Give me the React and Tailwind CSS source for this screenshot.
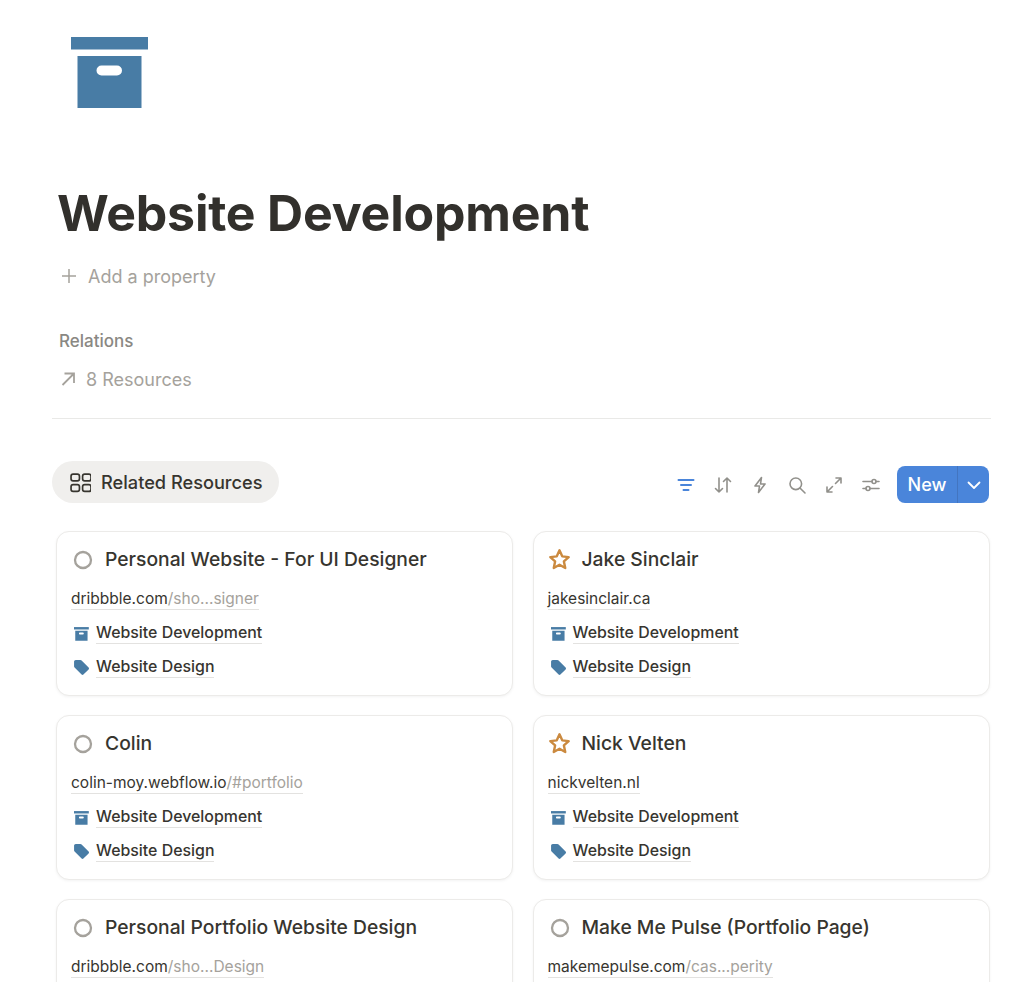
import React from "react";

const BLUE = "#487CA5";

function BoxIcon({ className }) {
  return (
    <svg viewBox="0 0 78 72" className={className} fill={BLUE}>
      <rect x="0" y="0" width="77" height="12.5" />
      <path fillRule="evenodd" d="M6.5 19h64v52h-64z M30.5 28.5a5 5 0 0 0 0 10h15.5a5 5 0 0 0 0-10z" />
    </svg>
  );
}

function TagIcon() {
  return (
    <svg viewBox="0 0 16 16" className="w-[17px] h-[17px] shrink-0" fill={BLUE}>
      <path d="M1 2.6C1 1.7 1.7 1 2.6 1h4.3c.5 0 .9.2 1.2.5l6.6 6.6c.5.5.5 1.2 0 1.7l-4.9 4.9c-.5.5-1.2.5-1.7 0L1.5 8.1C1.2 7.8 1 7.4 1 6.9z" />
    </svg>
  );
}

function Circle() {
  return (
    <svg viewBox="0 0 20 20" className="w-5 h-5 shrink-0" fill="none" stroke="#A5A29C" strokeWidth="2.3">
      <circle cx="10" cy="10" r="8" />
    </svg>
  );
}

function Star() {
  return (
    <svg viewBox="0 0 22 22" className="w-[23px] h-[23px] shrink-0 -ml-[2px]" fill="none" stroke="#CB8A3F" strokeWidth="2.3" strokeLinejoin="round">
      <path d="M11 2.2l2.6 5.8 6.2.7-4.6 4.2 1.3 6.2L11 16l-5.5 3.1 1.3-6.2-4.6-4.2 6.2-.7z" />
    </svg>
  );
}

function Card({ icon, title, host, path }) {
  return (
    <div className="h-[165px] rounded-[13px] border border-[#ECEBE9] bg-white pl-[14px] pr-3 shadow-[0_1px_3px_rgba(15,15,15,0.05)] overflow-hidden">
      <div className="flex items-center h-[27px] mt-[14px]">
        <span className="w-[34px] flex items-center pl-[2px]">{icon}</span>
        <span className="text-[19.3px] font-medium text-[#37352F] leading-[27px]">{title}</span>
      </div>
      <div className="mt-[14px] h-[23px] leading-[23px] text-[15.5px] text-[#37352F]">
        <span className="border-b border-[#E3E2E0] pb-px">
          {host}
          {path && <span className="text-[#A5A29C]">{path}</span>}
        </span>
      </div>
      <div className="mt-[12px] h-[23px] flex items-center text-[15.9px] font-medium text-[#37352F]">
        <span className="w-[25px] flex pl-[3px]">
          <BoxIcon className="w-[15px] h-[14px]" />
        </span>
        <span className="border-b border-[#E3E2E0] leading-[20px]">Website Development</span>
      </div>
      <div className="mt-[11px] h-[23px] flex items-center text-[15.9px] font-medium text-[#37352F]">
        <span className="w-[25px] flex pl-[2px]">
          <TagIcon />
        </span>
        <span className="border-b border-[#E3E2E0] leading-[20px]">Website Design</span>
      </div>
    </div>
  );
}

const G = "#91908B";

function Toolbar() {
  const cls = "w-5 h-5";
  const p = { fill: "none", stroke: G, strokeWidth: 1.6, strokeLinecap: "round", strokeLinejoin: "round", viewBox: "0 0 20 20", className: cls };
  return (
    <div className="flex items-center gap-[17px]">
      <svg {...p} stroke="#4A85DA">
        <path d="M2.5 5h15M5 10h10M7.5 15h5" strokeWidth="2" />
      </svg>
      <svg {...p}>
        <path d="M6 3v14M2.5 13.5L6 17l3.5-3.5M14 17V3M10.5 6.5L14 3l3.5 3.5" />
      </svg>
      <svg {...p}>
        <path d="M11.5 2.5L5 11h4.5l-1 6.5L15 9h-4.5z" />
      </svg>
      <svg {...p}>
        <circle cx="8.8" cy="8.8" r="5.8" />
        <path d="M13.2 13.2L18 18" />
      </svg>
      <svg {...p}>
        <path d="M11.5 8.5L17 3M12 3h5v5M8.5 11.5L3 17M3 12v5h5" />
      </svg>
      <svg {...p}>
        <path d="M2 6.5h9M15 6.5h3M2 13.5h3M9 13.5h9" />
        <circle cx="13" cy="6.5" r="2" />
        <circle cx="7" cy="13.5" r="2" />
      </svg>
    </div>
  );
}

export default function App() {
  return (
    <div className="w-[1024px] h-[982px] overflow-hidden bg-white font-['Inter',sans-serif] text-[#37352F]">
      <div className="pt-[37px] pl-[71px]">
        <BoxIcon className="w-[78px] h-[72px]" />
      </div>
      <h1 className="mt-[74px] ml-[57px] text-[50px] leading-[60px] font-bold text-[#32302C] tracking-[-0.2px]">Website Development</h1>
      <div className="mt-[21px] ml-[61px] flex items-center h-[24px] text-[18px] text-[#A5A29C]">
        <svg viewBox="0 0 16 16" className="w-4 h-4 mr-[11px]" fill="none" stroke="#A5A29C" strokeWidth="1.5">
          <path d="M8 1v14M1 8h14" />
        </svg>
        Add a property
      </div>
      <div className="mt-[43px] ml-[59px] h-[20px] leading-[20px] text-[17px] font-medium text-[#8A8883]">Relations</div>
      <div className="mt-[16px] ml-[60px] flex items-center h-[24px] text-[18px] text-[#A5A29C]">
        <svg viewBox="0 0 16 16" className="w-4 h-4 mr-[10px]" fill="none" stroke="#A5A29C" strokeWidth="1.8">
          <path d="M2.5 14L14 2.5M4.5 2.5H14V12" />
        </svg>
        8 Resources
      </div>
      <div className="mt-[27px] mx-[52px] w-[939px] h-px bg-[#E9E9E7]" />
      <div className="mt-[42px] ml-[52px] w-[937px] flex justify-between h-[42px]">
        <div className="flex items-center h-[42px] w-[227px] rounded-full bg-[#F0EFED] pl-[18px]">
          <svg viewBox="0 0 20 20" className="w-[21px] h-[21px] mr-[10px]" fill="none" stroke="#37352F" strokeWidth="1.6">
            <rect x="1" y="2" width="8" height="6.5" rx="2" />
            <rect x="12" y="2" width="8" height="6.5" rx="2" />
            <rect x="1" y="12" width="8" height="6.5" rx="2" />
            <rect x="12" y="12" width="8" height="6.5" rx="2" />
          </svg>
          <span className="text-[18.2px] font-medium pt-[2px]">Related Resources</span>
        </div>
        <div className="flex items-center gap-[16px] mt-[5px] h-[37px]">
          <Toolbar />
          <div className="flex items-center h-[37px] w-[92px] rounded-[8px] bg-[#4A85DA] text-white">
            <span className="w-[60px] text-center text-[18px] font-medium">New</span>
            <span className="w-px h-full bg-[#4375C0]" />
            <span className="flex-1 flex justify-center">
              <svg viewBox="0 0 16 16" className="w-4 h-4" fill="none" stroke="white" strokeWidth="1.8" strokeLinecap="round" strokeLinejoin="round">
                <path d="M2.5 5.5L8 11l5.5-5.5" />
              </svg>
            </span>
          </div>
        </div>
      </div>
      <div className="mt-[28px] ml-[56px] grid grid-cols-[457px_457px] gap-x-[19.5px] gap-y-[19px]">
        <Card icon={<Circle />} title="Personal Website - For UI Designer" host="dribbble.com" path="/sho...signer" />
        <Card icon={<Star />} title="Jake Sinclair" host="jakesinclair.ca" />
        <Card icon={<Circle />} title="Colin" host="colin-moy.webflow.io" path="/#portfolio" />
        <Card icon={<Star />} title="Nick Velten" host="nickvelten.nl" />
        <Card icon={<Circle />} title="Personal Portfolio Website Design" host="dribbble.com" path="/sho...Design" />
        <Card icon={<Circle />} title="Make Me Pulse (Portfolio Page)" host="makemepulse.com" path="/cas...perity" />
      </div>
    </div>
  );
}
